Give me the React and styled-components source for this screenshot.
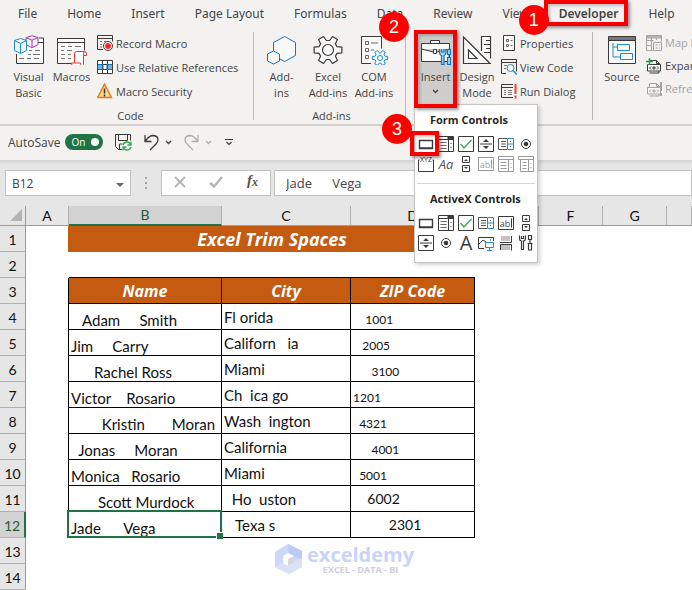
import React from "react";
import { useState } from "react";
import styled, { createGlobalStyle, css } from "styled-components";

const GlobalStyle = createGlobalStyle`
  * {
    box-sizing: border-box;
  }
  body {
    margin: 0;
    background: #fff;
    font-family: "Open Sans", "Noto Sans", sans-serif;
    color: #444;
  }
  button, input {
    font: inherit;
    color: inherit;
    padding: 0;
    border: none;
    background: none;
  }
`;

const Page = styled.div`
  width: 100%;
  overflow: hidden;
`;

/* ---------- ribbon ---------- */

const Tabs = styled.nav`
  display: flex;
  gap: 30px;
  height: 28px;
  padding-left: 18px;
  background: #f3f2f1;
`;

const Tab = styled.button`
  position: relative;
  flex-shrink: 0;
  font-family: "Noto Sans", sans-serif;
  font-size: 12px;
  line-height: 26px;
  white-space: nowrap;
  font-weight: ${(p) => (p.$active ? 600 : 400)};
`;

const Ribbon = styled.div`
  display: flex;
  height: 98px;
  padding-top: 4px;
  background: #f3f2f1;
  border-bottom: 2px solid #d2d0ce;
  font-size: 11px;
`;

const Group = styled.section`
  flex: ${(p) => (p.$width ? `0 0 ${p.$width}px` : "1 0 200px")};
  display: flex;
  flex-direction: column;
  height: 88px;
  padding-left: ${(p) => p.$pad}px;
  border-right: 1px solid #b9b7b5;
`;

const Items = styled.div`
  display: flex;
  height: 76px;
`;

const GroupLabel = styled.div`
  line-height: 16px;
  text-align: center;
`;

const BigButton = styled.button`
  width: ${(p) => p.$width}px;
  height: 76px;
  display: flex;
  flex-direction: column;
  align-items: center;
  gap: 4px;
  padding-top: 3px;
  line-height: 16px;
  white-space: pre;
  background: ${(p) => (p.$pressed ? "#cfcdcb" : "none")};
`;

const Anchor = styled.div`
  position: relative;
`;

const SmallColumn = styled.div`
  display: flex;
  flex-direction: column;
  padding-left: ${(p) => p.$pad}px;
`;

const SmallButton = styled.button`
  display: flex;
  align-items: center;
  gap: 3px;
  height: ${(p) => p.$height || 24}px;
  padding-bottom: 2px;
  white-space: nowrap;
  color: ${(p) => (p.disabled ? "#a6a4a2" : "inherit")};

  svg {
    flex-shrink: 0;
  }
`;

/* ---------- step markers ---------- */

const Frame = styled.span`
  position: absolute;
  z-index: 3;
  inset: ${(p) => p.$inset};
  border: 4px solid #f80000;
  box-shadow: 2px 2px 3px rgba(0, 0, 0, 0.4), inset 2px 2px 3px rgba(0, 0, 0, 0.2);
  pointer-events: none;
`;

const Badge = styled.span`
  position: absolute;
  z-index: 4;
  left: ${(p) => p.$left}px;
  top: ${(p) => p.$top}px;
  width: 30px;
  height: 30px;
  border-radius: 50%;
  background: #fd0000;
  color: #fff;
  font: 400 18px/30px "Liberation Sans", sans-serif;
  text-align: center;
`;

/* ---------- controls menu ---------- */

const Menu = styled.div`
  position: absolute;
  z-index: 2;
  top: 72px;
  left: -2px;
  width: 124px;
  padding-bottom: 9px;
  background: #fff;
  border: 1px solid #c6c4c2;
  box-shadow: 2px 2px 4px rgba(0, 0, 0, 0.18);
`;

const MenuTitle = styled.h2`
  margin: 0;
  padding-left: 15px;
  font-size: 11px;
  font-weight: 700;
  line-height: 29px;
  color: #262626;
  white-space: nowrap;
`;

const MenuGrid = styled.div`
  display: grid;
  grid-template-columns: repeat(6, 20px);
  grid-auto-rows: 20px;
  padding-left: 1px;
`;

const MenuItem = styled.button`
  position: relative;
  display: grid;
  place-items: center;
`;

const MenuRule = styled.hr`
  margin: 9px 2px 0;
  border: none;
  border-top: 1px solid #d8d6d4;
`;

/* ---------- quick access bar ---------- */

const QuickBar = styled.div`
  display: flex;
  align-items: center;
  height: 34px;
  padding: 0 0 2px 8px;
  background: #f3f2f1;
  font-size: 12px;
`;

const AutoSave = styled.label`
  display: flex;
  align-items: center;
  gap: 5px;

  input {
    position: absolute;
    opacity: 0;
  }
`;

const Track = styled.span`
  display: flex;
  align-items: center;
  justify-content: space-between;
  width: 38px;
  height: 16px;
  padding: 0 4px 0 6px;
  border-radius: 8px;
  background: ${(p) => (p.$on ? "#217346" : "#8a8886")};
  color: #fff;
  font-size: 10px;
`;

const Knob = styled.i`
  width: 8px;
  height: 8px;
  border-radius: 50%;
  background: #fff;
`;

const QuickButton = styled.button`
  display: flex;
  align-items: center;
  gap: 6px;
  margin-left: 12px;
`;

/* ---------- formula bar ---------- */

const FormulaBar = styled.div`
  display: flex;
  align-items: center;
  height: 46px;
  padding-left: 5px;
  background: linear-gradient(#d2d2d2, #e6e6e6 5px);
  font-size: 12px;
`;

const Box = styled.div`
  display: flex;
  align-items: center;
  flex: ${(p) => (p.$width ? `0 0 ${p.$width}px` : "1")};
  height: 26px;
  background: #fff;
  border: 1px solid #c3c3c3;
`;

const NameBox = styled(Box)`
  padding: 0 6px;

  input {
    flex: 1;
    width: 80px;
  }
`;

const ActionBox = styled(Box)`
  justify-content: space-between;
  padding: 0 10px 0 12px;
`;

const FormulaBox = styled(Box)`
  margin-left: 3px;
  font-size: 13px;

  input {
    width: 100%;
    padding-left: 11px;
  }
`;

const Dots = styled.div`
  display: grid;
  gap: 3px;
  margin: 0 14px;

  i {
    width: 2px;
    height: 2px;
    background: #a6a6a6;
  }
`;

/* ---------- sheet ---------- */

const SheetArea = styled.div`
  position: relative;
`;

const Sheet = styled.table`
  width: 100%;
  table-layout: fixed;
  border-collapse: separate;
  border-spacing: 0;
  background: #fff;
  color: #111;
  font-family: Lato, "Open Sans", sans-serif;
  font-size: 14px;
  line-height: 18px;
`;

const Corner = styled.td`
  height: 20px;
  padding: 0 3px 2px 0;
  background: #e6e6e6;
  border-right: 1px solid #9b9b9b;
  border-bottom: 1px solid #9b9b9b;

  svg {
    display: block;
    margin-left: auto;
  }
`;

const ColHead = styled.th`
  height: 20px;
  padding: 0;
  font-weight: 400;
  background: ${(p) => (p.$on ? "#d2d2d2" : "#e6e6e6")};
  color: ${(p) => (p.$on ? "#1e5c3a" : "inherit")};
  border-right: 1px solid #b0b0b0;
  border-bottom: ${(p) => (p.$on ? "2px solid #217346" : "1px solid #9b9b9b")};
`;

const RowHead = styled.th`
  height: 26px;
  padding: 2px 0 0;
  font-weight: 400;
  background: ${(p) => (p.$on ? "#d2d2d2" : "#e6e6e6")};
  color: ${(p) => (p.$on ? "#1e5c3a" : "inherit")};
  border-right: ${(p) => (p.$on ? "2px solid #217346" : "1px solid #9b9b9b")};
  border-bottom: 1px solid #b0b0b0;
`;

const Plain = styled.td`
  padding: 0;
  border-right: ${(p) => (p.$edge ? `1px solid ${p.$edge}` : "none")};
  border-bottom: ${(p) => (p.$top ? "1px solid #000" : "none")};
`;

const heading = css`
  padding: 0;
  background: #c55a11;
  color: #fff;
  font-family: "Open Sans", sans-serif;
  font-weight: 700;
  font-style: italic;
  text-align: center;
`;

const Title = styled.td`
  ${heading}
  font-size: 18px;
`;

const Head = styled.th`
  ${heading}
  font-size: 16px;
  border-right: 1px solid #000;
  border-bottom: 1px solid #000;
`;

const Cell = styled.td`
  position: relative;
  height: 26px;
  padding: 0 0 0 2px;
  white-space: pre;
  vertical-align: ${(p) => p.$align || "bottom"};
  font-size: ${(p) => p.$size || 15}px;
  line-height: ${(p) => (p.$align ? 22 : 18)}px;
  border-right: 1px solid #000;
  border-bottom: 1px solid #000;
`;

const Selection = styled.span`
  position: absolute;
  z-index: 1;
  inset: -2px -1px -1px -2px;
  border: 2px solid #217346;

  &::after {
    content: "";
    position: absolute;
    right: -3px;
    bottom: -3px;
    width: 6px;
    height: 6px;
    background: #217346;
    border-left: 1px solid #fff;
    border-top: 1px solid #fff;
  }
`;

const Watermark = styled.div`
  position: absolute;
  left: 275px;
  bottom: 16px;
  display: flex;
  align-items: center;
  gap: 5px;
  color: #c8d4f8;
  font-size: 20px;
  font-weight: 700;
  line-height: 22px;
`;

const Tagline = styled.div`
  color: #cdd0d6;
  font-size: 9px;
  line-height: 8px;
  text-align: center;
`;

/* ---------- icons ---------- */

const Svg = ({ w = 16, h = w, children, ...rest }) => (
  <svg width={w} height={h} viewBox={`0 0 ${w} ${h}`} fill="none" stroke="#3b3a39" aria-hidden="true" {...rest}>
    {children}
  </svg>
);

const VisualBasicIcon = () => (
  <Svg w={30}>
    <path d="M2.500 19v9.500h27v-25.500h-4.500M24 7.500h5.500" fill="#fafafa" />
    <path d="M15 15.500h3m3 0h5M14 19.500h3m2 0h7M5 23.500h5m3 0h4m3 0h5" stroke="#777" />
    <path d="M18 .7l6 2v7l-6 3-6-3v-7zM12 2.700l6 2.500 6-2.500M18 5.200v7" stroke="#a33fb5" fill="#fbf4fc" />
    <path d="M6.500 3.500l6 2v10l-6 3-6-3v-10zM.5 5.500l6 3 6-3M6.500 8.500v10" stroke="#1e8bcd" fill="#f3faff" />
  </Svg>
);

const MacrosIcon = () => (
  <Svg w={30}>
    <path d="M14 28.500H.5v-25h27v12" fill="#fafafa" />
    <path d="M.5 7.500h27" />
    <path d="M4 11.500h4m3 0h4m3 0h6M4 15.500h3m3 0h5M4 19.500h4m3 0h3M4 23.500h4m3 0h3" stroke="#777" />
    <path d="M17.500 28V18.500q0-2 2-2h8q2 0 2 2.500v1.500h-3v9q0 2-2 2H16.500q-2-.5-2-3.500h9q0 3 2 3M26.500 20.500v-2q0-2 1.500-2" stroke="#ee3a32" fill="#fff" />
  </Svg>
);

const RecordIcon = () => (
  <Svg>
    <path d="M6 14.500H.5V.5h15v6M.5 3.500h15" />
    <path d="M3 6.500h2m2 0h2M3 9.500h2M3 12h2" stroke="#777" />
    <circle cx="11" cy="11" r="4.500" fill="#fff" />
    <circle cx="11" cy="11" r="2.500" fill="#f22" stroke="#f22" />
  </Svg>
);

const RelativeIcon = () => (
  <Svg>
    <path d="M.5 1.500h15v13H.5z" fill="#fff" />
    <path d="M1 6h4v4H1zM11 6h4v4h-4z" fill="#6fb6e8" stroke="none" />
    <path d="M5.500 1v14M10.500 1v14M.5 5.500h15M.5 10.500h15" />
    <path d="M1 5.500h5v5H1M15 5.500h-5v5h5" stroke="#1b6fb5" />
  </Svg>
);

const WarningIcon = () => (
  <Svg>
    <path d="M7.500 1.200L14.500 14.500H.7z" fill="#fbd893" stroke="#e07b1a" strokeWidth="1.400" />
    <path d="M7.500 5.500v5M7.500 11.500v2" stroke="#333" strokeWidth="1.500" />
  </Svg>
);

const AddinsIcon = () => (
  <Svg w={30} stroke="#1b73c4">
    <path d="M17.500 1.500l11 6v13l-11 6-11-6v-13z" fill="#f9f9f9" />
    <path d="M6.500 16l6 3v7l-6 3-6-3v-7z" fill="#f9f9f9" />
  </Svg>
);

// six teeth, one pair lying on the horizontal axis
const gearPath = (c, outer, inner) => {
  const pts = [];
  for (let i = 0; i < 6; i++) {
    [[-0.36, inner], [-0.2, outer], [0.2, outer], [0.36, inner]].forEach(([a, r]) => {
      const t = Math.PI / 6 + (i * Math.PI) / 3 + a;
      pts.push(`${(c + r * Math.sin(t)).toFixed(1)} ${(c - r * Math.cos(t)).toFixed(1)}`);
    });
  }
  return `M${pts.join("L")}z`;
};

const GearIcon = () => (
  <Svg w={30} strokeLinejoin="round">
    <path d={gearPath(15, 14.2, 9.6)} fill="#fafafa" strokeWidth="1.200" />
    <circle cx="15" cy="15" r="5.500" strokeWidth="1.200" />
  </Svg>
);

const ComIcon = () => (
  <Svg w={30}>
    <path d="M12 28.500H2.500V1.500h20v12" fill="#fafafa" />
    <path d="M6.500 6.500h3v3h-3zM6.500 13.500h3v3h-3zM6.500 20.500h3v3h-3zM12 8h7M12 15h3" stroke="#666" />
    <g transform="translate(13 15)" stroke="#1e8bcd">
      <path d={gearPath(8, 7.8, 5.2)} fill="#f3faff" />
      <circle cx="8" cy="8" r="2.500" />
    </g>
  </Svg>
);

const ToolboxIcon = () => (
  <Svg w={30}>
    <path d="M.5 8.500h28v18H.5zM9.500 8V5.500h9V8M.5 14l12 3h3l13-3" fill="#fafafa" />
    <path d="M12.500 14.500h3v4h-3z" fill="#fff" />
    <path d="M18.500 14v3q0 3 2 3.500v9h2.500V20.500q2-.5 2-3.500v-3M20.500 14v3h2.500v-3" stroke="#1672bd" fill="#a8d4f3" strokeWidth="1.200" />
    <path d="M26.500 14.500h3v5h-3zM28 19.500v3M26.500 22.500h3v7h-3z" stroke="#1672bd" fill="#a8d4f3" strokeWidth="1.200" />
  </Svg>
);

const DesignIcon = () => (
  <Svg w={30} strokeWidth="1.200">
    <path d="M19.500 16V1.500h9v22" fill="#fafafa" />
    <path d="M24 5.500h4M22 9.500h6M24 13.500h4M22 17.500h6" />
    <path d="M1.500 2v26.500H28zM6.500 15v8.500h8.500z" fill="#fafafa" />
  </Svg>
);

const PropertiesIcon = () => (
  <Svg>
    <path d="M2.500.5h11v15h-11z" fill="#fafafa" />
    <path d="M5.500 4.500h2v2h-2zM5.500 9.500h2v2h-2zM9.500 5.500h2M9.500 10.500h2" stroke="#666" />
  </Svg>
);

const ViewCodeIcon = () => (
  <Svg>
    <path d="M5 14.500H.5V.5h15v12M.5 3.500h15" />
    <path d="M3 6.500h3M3 9.500h2" stroke="#777" />
    <circle cx="9.500" cy="9" r="3.500" stroke="#1e8bcd" fill="#fff" />
    <path d="M12 11.500l4 4" stroke="#1e8bcd" strokeWidth="1.500" />
  </Svg>
);

const RunDialogIcon = () => (
  <Svg>
    <path d="M12 14.500H.5V1.500H12M.5 4.500H12" />
    <path d="M3 7.500h2m2 0h4M3 9.500h2m2 0h4M3 11.500h2m2 0h4" stroke="#777" />
    <path d="M14.500 1v10M14.500 12.500v3" stroke="#e8483f" strokeWidth="2" />
  </Svg>
);

const SourceIcon = () => (
  <Svg w={30}>
    <path d="M1.500 1.500h27v27h-27z" fill="#fafafa" />
    <path d="M2 2h26v3H2z" fill="#777" stroke="none" />
    <path d="M1.500 5.500h27" />
    <path d="M10.500 9.500h12v6h-12zM13.500 18.500h12v6h-12zM6 8v14h7M6 12h4" stroke="#1e8bcd" />
  </Svg>
);

const MapIcon = () => (
  <Svg stroke="#a6a4a2">
    <path d="M1 1h14v2H1z" fill="#c4c2c0" />
    <path d="M.5.5h15v6M.5.500v15H7M.5 5.500h7M5.500 3v12M.5 10.500h5M10.500 3v2" />
    <path d="M7.500 7.500h8v8h-8zM9.500 10h2M13 10h1M9.500 13h2M13 13h1" />
  </Svg>
);

const PackIcon = ({ off }) => (
  <Svg stroke={off ? "#a6a4a2" : "#3b3a39"}>
    <path d="M3.500 5.500V2.500h7l3 3v2M10.500 2.500v3h3M3.500 15h9.500v-2" />
    <path d="M1.500 6.500h13v6.500h-13z" fill="#f8f8f8" />
    <path d="M5 8.500L3.500 10 5 11.500M11 8.500l1.500 1.500L11 11.500M7 9h2v2H7z" />
    {off ? <path d="M15 1v9M15 12v3" strokeWidth="2" /> : <path d="M3.500 0v7M0 3.500h7" stroke="#1fa24a" strokeWidth="1.500" />}
  </Svg>
);

const Chevron = ({ color = "#444" }) => (
  <Svg w={7} h={5} stroke={color} strokeWidth="1.300">
    <path d="M1 1l2.500 2.500L6 1" />
  </Svg>
);

const ArrowPair = ({ x = 8, top = 5, bottom = 11, size = 2 }) => (
  <path
    d={`M${x - size} ${top + 1}h${size * 2}l-${size}-${size}zM${x - size} ${bottom - 1}h${size * 2}l-${size} ${size}z`}
    fill="#3b3a39"
    stroke="none"
  />
);

const controlIcons = {
  button: <path d="M1.500 4.500h13v8h-13zM2 12h13" fill="#fff" strokeWidth="1.400" />,
  combo: (
    <>
      <path d="M.5.5h15v15H.5zM10.500 3.500v12M.5 3.500h15" />
      <path d="M2.500 6.500h6M2.500 9.500h6M2.500 12.500h6" stroke="#666" />
      <path d="M10 1h5v2h-5z" fill="#3b3a39" />
      <ArrowPair x={13} top={7} bottom={12} size={1} />
    </>
  ),
  check: (
    <>
      <path d="M.5.5h15v15H.5z" />
      <path d="M2.500 8l3.500 4 7.500-8" stroke="#3fa65c" strokeWidth="1.400" />
    </>
  ),
  spin: (
    <>
      <path d="M.5.5h15v15H.5zM2 8h12" />
      <ArrowPair x={8} top={5} bottom={11} size={3} />
    </>
  ),
  list: (
    <>
      <path d="M9 13.500H.5v-11H9M3 5.500h5M3 8h5M3 10.500h5" stroke="#555" />
      <path d="M9.500 2.500h6v11h-6zM9.500 8h6" stroke="#1e8bcd" />
      <ArrowPair x={12.5} top={5} bottom={11} size={1} />
    </>
  ),
  radio: (
    <>
      <circle cx="8" cy="8" r="4.500" fill="#fff" />
      <circle cx="8" cy="8" r="2.300" fill="#3b3a39" stroke="none" />
    </>
  ),
  group: (
    <>
      <path d="M1.500 4H.5v11.500h15V4h-1" />
      <text x="8" y="6" fontSize="7" fontFamily="Open Sans, sans-serif" textAnchor="middle" fill="#333" stroke="none">XYZ</text>
    </>
  ),
  label: (
    <text x="8" y="13" fontSize="13" fontStyle="italic" fontFamily="Open Sans, sans-serif" textAnchor="middle" fill="#555" stroke="none">Aa</text>
  ),
  scroll: (
    <>
      <path d="M4.500.5h7v6h-7zM4.500 9.500h7v6h-7z" />
      <ArrowPair x={8} top={4} bottom={12} size={2} />
    </>
  ),
  text: (
    <>
      <path d="M.5 1.500h15v13H.5zM13.500 3.500v9" />
      <text x="7" y="12" fontSize="9" fontFamily="Open Sans, sans-serif" textAnchor="middle" fill="#444" stroke="none">ab</text>
    </>
  ),
  listEdit: (
    <>
      <path d="M.5.5h15v15H.5zM.5 3.500h15M10.500 3.500v12M2.500 6.500h6M2.500 9.500h6M2.500 12.500h6" />
      <ArrowPair x={13} top={7} bottom={12} size={1} />
    </>
  ),
  comboEdit: (
    <>
      <path d="M2.500 4v11.500h13V.5H.5v3h15M10.500 3.500v12M4.500 6.500h4M4.500 9.500h4M4.500 12.500h4" />
      <ArrowPair x={13} top={7} bottom={12} size={1} />
    </>
  ),
  letter: (
    <text x="8" y="15" fontSize="20" fontFamily="Open Sans, sans-serif" textAnchor="middle" fill="#3b3a39" stroke="none">A</text>
  ),
  image: (
    <>
      <path d="M6 13.500H.5v-11h15V6M1 9l4-4 3 2M12 5h1" />
      <path d="M7.500 7.500h8v5h-8zM11.500 13v2M9 15.500h5" stroke="#1e8bcd" fill="#fff" />
    </>
  ),
  toggle: (
    <>
      <path d="M3 1h9v5H3zM3 10h9v5H3z" fill="#c4c2c0" stroke="none" />
      <path d="M2 7.500h11.500V1M2.500 15V9.500h11v6" />
    </>
  ),
  tools: (
    <>
      <path d="M1.500.5v3q0 2 2 2.500v8.500h2V6q2-.5 2-2.500v-3M3.500 1v2.500h2V1" strokeWidth="1.200" />
      <path d="M10.500.5h3v4h-3zM12 4.500v4M10.500 8.500h3v6.500h-3zM9.500 8.500h5" strokeWidth="1.200" />
    </>
  ),
};

const formControls = [
  { name: "Button", icon: "button", marked: true },
  { name: "Combo Box", icon: "combo" },
  { name: "Check Box", icon: "check" },
  { name: "Spin Button", icon: "spin" },
  { name: "List Box", icon: "list" },
  { name: "Option Button", icon: "radio" },
  { name: "Group Box", icon: "group" },
  { name: "Label", icon: "label" },
  { name: "Scroll Bar", icon: "scroll" },
  { name: "Text Field", icon: "text", off: true },
  { name: "Combo List", icon: "listEdit", off: true },
  { name: "Combo Drop-Down", icon: "comboEdit", off: true },
];

const activeXControls = [
  { name: "Command Button", icon: "button" },
  { name: "Combo Box", icon: "combo" },
  { name: "Check Box", icon: "check" },
  { name: "List Box", icon: "list" },
  { name: "Text Box", icon: "text" },
  { name: "Scroll Bar", icon: "scroll" },
  { name: "Spin Button", icon: "spin" },
  { name: "Option Button", icon: "radio" },
  { name: "Label", icon: "letter" },
  { name: "Image", icon: "image" },
  { name: "Toggle Button", icon: "toggle" },
  { name: "More Controls", icon: "tools" },
];

const tabs = ["File", "Home", "Insert", "Page Layout", "Formulas", "Data", "Review", "View", "Developer", "Help"];

const columns = ["A", "B", "C", "D", "E", "F", "G"];
const widths = [26, 43, 153, 129, 124, 64, 64, 64];

// leading and inner spaces are part of the data
const rows = [
  ["   Adam     Smith", "Fl orida", "    1001"],
  ["Jim     Carry", "Californ   ia", "   2005"],
  ["      Rachel Ross", "Miami", "      3100"],
  ["Victor    Rosario", "Ch  ica go", "1201"],
  ["        Kristin       Moran", "Wash  ington", "  4321"],
  ["  Jonas     Moran", "California", "      4001"],
  ["Monica   Rosario", "Miami", "  5001"],
  ["       Scott Murdock", "  Ho  uston", "    6002"],
  ["Jade      Vega", "   Texa s", "          2301"],
];

const ControlGrid = ({ items }) => (
  <MenuGrid>
    {items.map((item) => (
      <MenuItem key={item.name} title={item.name} disabled={item.off}>
        <Svg opacity={item.off ? 0.5 : 1}>{controlIcons[item.icon]}</Svg>
        {item.marked && (
          <>
            <Frame $inset="-3px -3px -2px -6px" />
            <Badge $left={-34} $top={-20}>3</Badge>
          </>
        )}
      </MenuItem>
    ))}
  </MenuGrid>
);

const RibbonBar = () => (
  <Ribbon>
    <Group $width={254} $pad={8}>
      <Items>
        <BigButton $width={41}><VisualBasicIcon />{"Visual\nBasic"}</BigButton>
        <BigButton $width={45}><MacrosIcon />Macros</BigButton>
        <SmallColumn $pad={3}>
          <SmallButton><RecordIcon />Record Macro</SmallButton>
          <SmallButton><RelativeIcon />Use Relative References</SmallButton>
          <SmallButton><WarningIcon />Macro Security</SmallButton>
        </SmallColumn>
      </Items>
      <GroupLabel>Code</GroupLabel>
    </Group>
    <Group $width={152} $pad={4}>
      <Items>
        <BigButton $width={47}><AddinsIcon />{"Add-\nins"}</BigButton>
        <BigButton $width={46}><GearIcon />{"Excel\nAdd-ins"}</BigButton>
        <BigButton $width={46}><ComIcon />{"COM\nAdd-ins"}</BigButton>
      </Items>
      <GroupLabel>Add-ins</GroupLabel>
    </Group>
    <Group $width={187} $pad={10}>
      <Items>
        <Anchor>
          <BigButton $width={39} $pressed>
            <ToolboxIcon />
            Insert
            <Chevron />
          </BigButton>
          <Frame $inset="-2px -2px 0 -2px" />
          <Badge $left={-37} $top={-20}>2</Badge>
          <Menu>
            <MenuTitle>Form Controls</MenuTitle>
            <ControlGrid items={formControls} />
            <MenuRule />
            <MenuTitle>ActiveX Controls</MenuTitle>
            <ControlGrid items={activeXControls} />
          </Menu>
        </Anchor>
        <BigButton $width={44}><DesignIcon />{"Design\nMode"}</BigButton>
        <SmallColumn $pad={2}>
          <SmallButton><PropertiesIcon />Properties</SmallButton>
          <SmallButton><ViewCodeIcon />View Code</SmallButton>
          <SmallButton><RunDialogIcon />Run Dialog</SmallButton>
        </SmallColumn>
      </Items>
    </Group>
    <Group $pad={7}>
      <Items>
        <BigButton $width={44}><SourceIcon />Source</BigButton>
        <SmallColumn $pad={2}>
          <SmallButton $height={23} disabled><MapIcon />Map Properties</SmallButton>
          <SmallButton $height={23}><PackIcon />Expansion Packs</SmallButton>
          <SmallButton $height={23} disabled><PackIcon off />Refresh Data</SmallButton>
        </SmallColumn>
      </Items>
    </Group>
  </Ribbon>
);

const App = () => {
  const [autoSave, setAutoSave] = useState(true);
  const [cellName, setCellName] = useState("B12");
  const [formula, setFormula] = useState("Jade      Vega");

  return (
    <Page>
      <GlobalStyle />
      <Tabs>
        {tabs.map((tab) => (
          <Tab key={tab} $active={tab === "Developer"}>
            {tab}
            {tab === "Developer" && (
              <>
                <Frame $inset="0 -10px 2px -15px" />
                <Badge $left={-40} $top={5}>1</Badge>
              </>
            )}
          </Tab>
        ))}
      </Tabs>
      <RibbonBar />

      <QuickBar>
        <AutoSave>
          AutoSave
          <input type="checkbox" checked={autoSave} onChange={(e) => setAutoSave(e.target.checked)} />
          <Track $on={autoSave}>
            {autoSave ? "On" : "Off"}
            <Knob />
          </Track>
        </AutoSave>
        <QuickButton title="Save">
          <Svg w={17}>
            <path d="M7 15.500H3.500l-3-3V.5h15v6M3.500.5v6h9v-6M4.500 15v-5h3" />
            <path d="M8 11q1-3 4-3 2 0 3.500 2M16 7.500V11h-3.500M16 13q-1 3-4 3-2 0-3.500-2M8 16.500V13h3.500" stroke="#36a853" strokeWidth="1.300" />
          </Svg>
        </QuickButton>
        <QuickButton title="Undo">
          <Svg w={15} h={17} strokeWidth="1.300">
            <path d="M1 1v6.500h6.500M1.500 7Q5 1.500 9.500 1.500 14 2 14 6q0 2-2 4l-6 6" />
          </Svg>
          <Chevron />
        </QuickButton>
        <QuickButton title="Redo">
          <Svg w={15} h={17} strokeWidth="1.300" stroke="#b0aeac">
            <path d="M14 1v6.500H7.500M13.500 7Q10 1.500 5.500 1.500 1 2 1 6q0 2 2 4l6 6" />
          </Svg>
          <Chevron color="#b0aeac" />
        </QuickButton>
        <QuickButton title="Customize">
          <Svg w={10} h={8}>
            <path d="M1 1.500h8M2.500 4L5 6.500 7.500 4" strokeWidth="1.200" />
          </Svg>
        </QuickButton>
      </QuickBar>

      <FormulaBar>
        <NameBox $width={126}>
          <input aria-label="Name box" value={cellName} onChange={(e) => setCellName(e.target.value)} />
          <button title="Open names">
            <Svg w={8} h={5} stroke="none">
              <path d="M0 0h8L4 4z" fill="#666" />
            </Svg>
          </button>
        </NameBox>
        <Dots><i /><i /><i /></Dots>
        <ActionBox $width={110}>
          <button title="Cancel">
            <Svg w={12} stroke="#b5b5b5" strokeWidth="1.800"><path d="M1 1l10 10M11 1L1 11" /></Svg>
          </button>
          <button title="Enter">
            <Svg w={14} h={12} stroke="#b5b5b5" strokeWidth="2.400"><path d="M1 7l4 3.500L13 1" /></Svg>
          </button>
          <button title="Insert function">
            <Svg w={15} h={16} stroke="none" fill="#555" fontFamily="Liberation Serif, serif" fontStyle="italic" fontWeight="700">
              <text x="2" y="12" fontSize="15">f</text>
              <text x="7" y="13" fontSize="12">x</text>
            </Svg>
          </button>
        </ActionBox>
        <FormulaBox>
          <input aria-label="Formula" value={formula} onChange={(e) => setFormula(e.target.value)} />
        </FormulaBox>
      </FormulaBar>

      <SheetArea>
        <Sheet>
          <colgroup>
            {widths.map((w, i) => <col key={i} width={w} />)}
            <col />
          </colgroup>
          <thead>
            <tr>
              <Corner>
                <Svg w={12} stroke="none"><path d="M12 0v12H0z" fill="#b4b4b4" /></Svg>
              </Corner>
              {columns.map((c) => <ColHead key={c} $on={c === "B"}>{c}</ColHead>)}
              <ColHead />
            </tr>
          </thead>
          <tbody>
            <tr>
              <RowHead>1</RowHead>
              <Plain $edge="#c55a11" />
              <Title colSpan={3}>Excel Trim Spaces</Title>
              <Plain colSpan={4} />
            </tr>
            <tr>
              <RowHead>2</RowHead>
              <Plain />
              <Plain colSpan={3} $top />
              <Plain colSpan={4} />
            </tr>
            <tr>
              <RowHead>3</RowHead>
              <Plain $edge="#000" />
              <Head>Name</Head>
              <Head>City</Head>
              <Head>ZIP Code</Head>
              <Plain colSpan={4} />
            </tr>
            {rows.map(([name, city, zip], i) => {
              const selected = i === rows.length - 1;
              const large = i > 6;
              return (
                <tr key={i}>
                  <RowHead $on={selected}>{i + 4}</RowHead>
                  <Plain $edge="#000" />
                  <Cell>{name}{selected && <Selection />}</Cell>
                  <Cell $align="middle">{city}</Cell>
                  <Cell $size={large ? 14 : 12} $align={large ? "middle" : undefined}>{zip}</Cell>
                  <Plain colSpan={4} />
                </tr>
              );
            })}
            <tr><RowHead>13</RowHead><Plain colSpan={8} /></tr>
            <tr><RowHead>14</RowHead><Plain colSpan={8} /></tr>
          </tbody>
        </Sheet>
        <Watermark>
          <Svg w={27} h={30} stroke="none">
            <path d="M13 0l14 7v16l-13 7L0 23V8z" fill="#ccd8fa" />
            <path d="M13 0l14 7v9l-13-6z" fill="#bccbf4" />
            <path d="M0 23l9-5 5 2 13-6v9l-13 7z" fill="#dbe2f5" />
            <path d="M13 9l6 3v7l-6 3-5-3v-7z" fill="#fff" />
            <path d="M13 15l6-3v7l-6 3z" fill="#d3d5da" />
          </Svg>
          <div>
            exceldemy
            <Tagline>EXCEL - DATA - BI</Tagline>
          </div>
        </Watermark>
      </SheetArea>
    </Page>
  );
};

export default App;
